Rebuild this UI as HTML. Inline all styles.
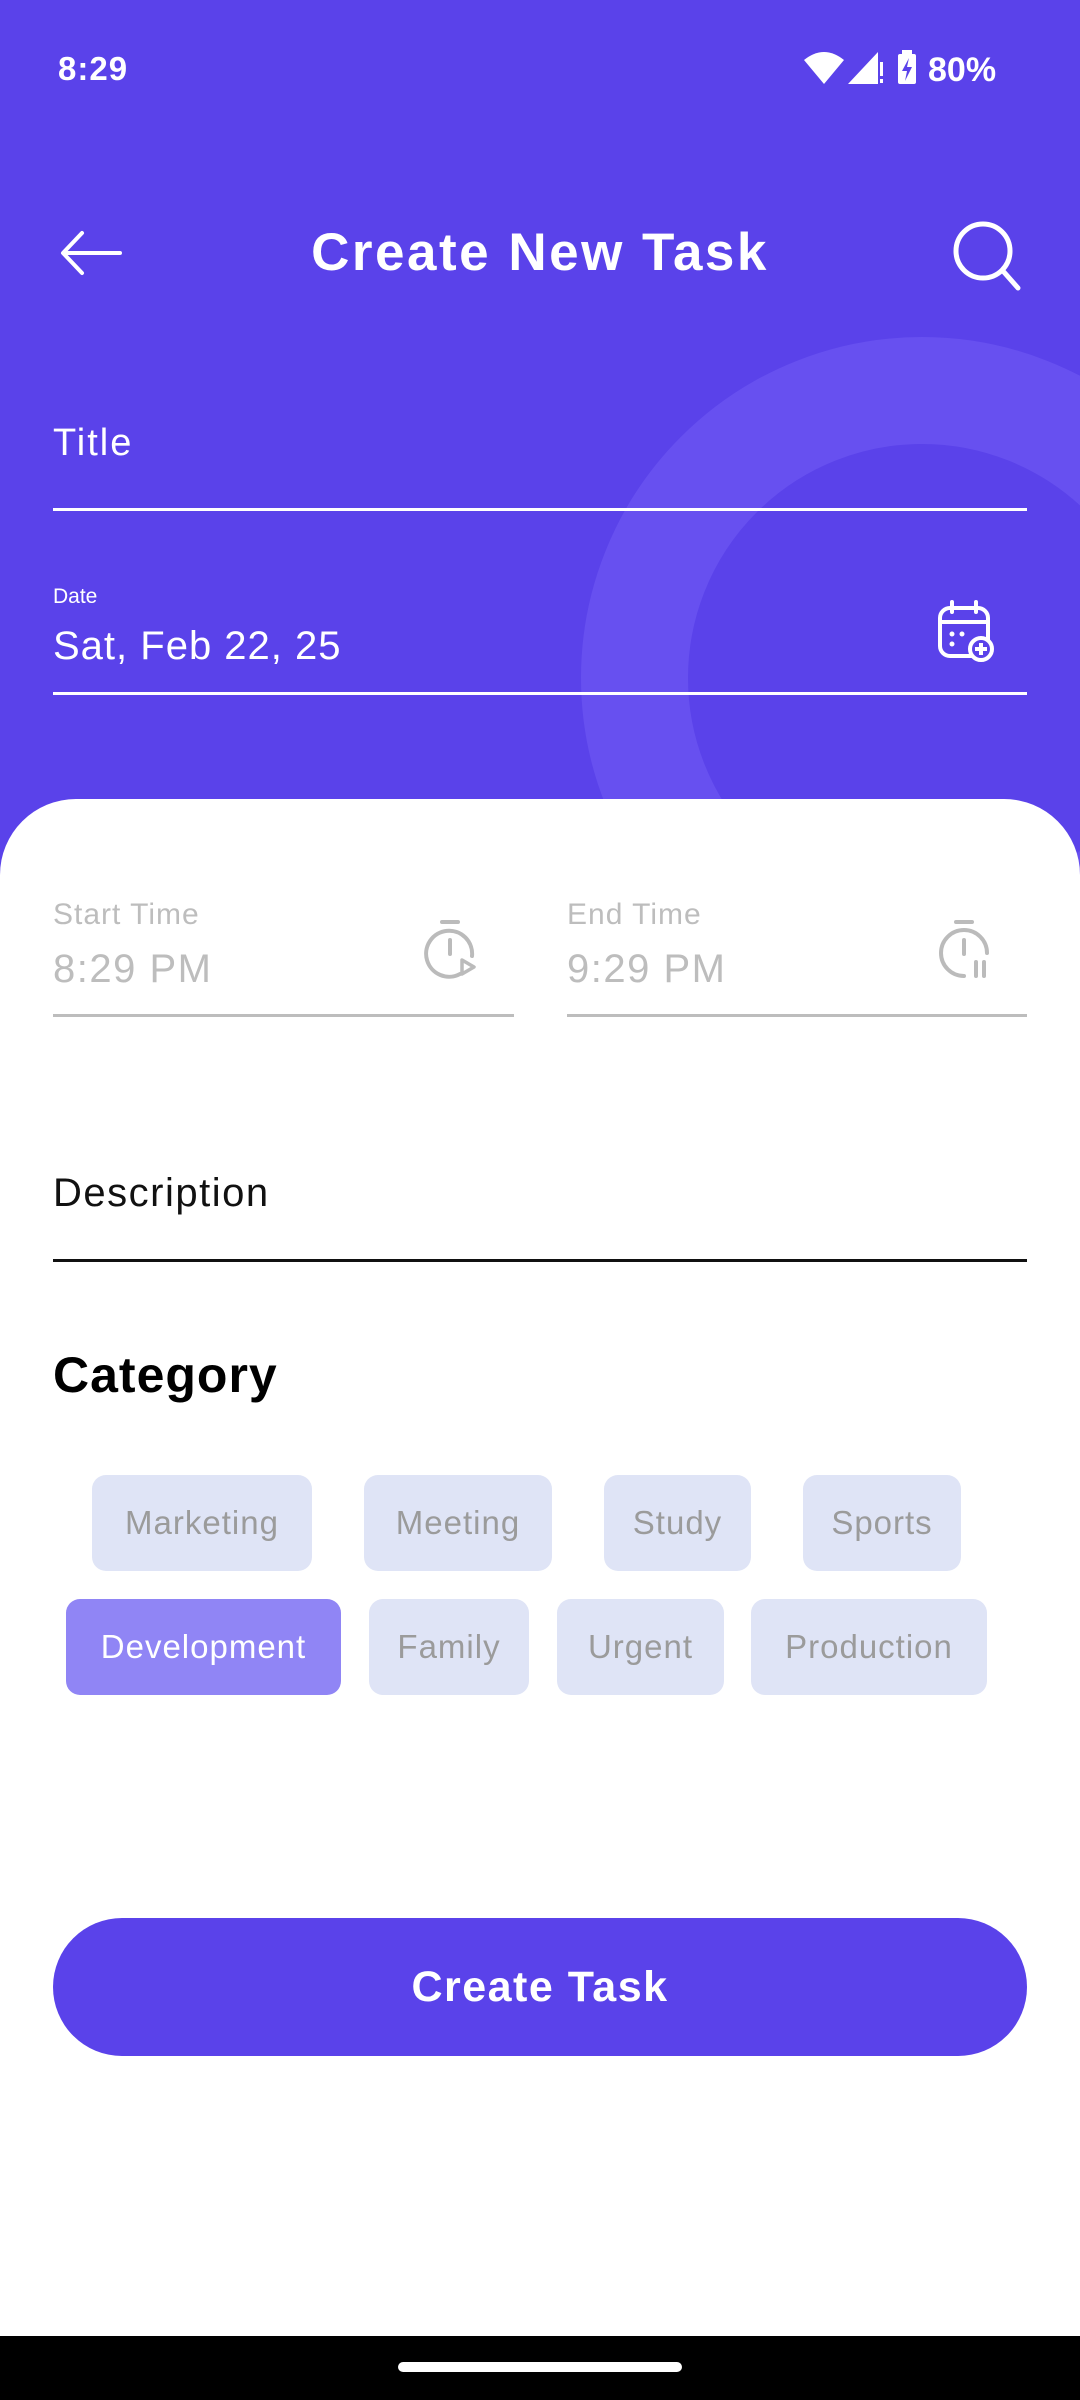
<!DOCTYPE html>
<html><head><meta charset="utf-8"><style>
*{margin:0;padding:0;box-sizing:border-box}
body{width:1080px;height:2400px;position:relative;overflow:hidden;background:#fff;font-family:"Liberation Sans","DejaVu Sans",sans-serif}
.top{position:absolute;left:0;top:0;width:1080px;height:900px;background:#5a42ea;overflow:hidden}
.ring{position:absolute;left:581px;top:337px;width:682px;height:682px;border-radius:50%;border:107px solid #6750f0}
.t{position:absolute;white-space:nowrap}
.line{position:absolute;height:3px}
.sheet{position:absolute;left:0;top:799px;width:1080px;height:1537px;background:#fff;border-radius:76px 76px 0 0}
.chip{position:absolute;height:96px;border-radius:14px;background:#dfe4f6;color:#9b9b9b;font-size:33px;display:flex;align-items:center;justify-content:center;letter-spacing:1px}
</style></head><body>
<div class="top"><div class="ring"></div></div>
<div class="t" style="left:58px;top:50px;font-size:33px;color:#fff;font-weight:bold;letter-spacing:1px">8:29</div>
<svg style="position:absolute;left:800px;top:48px" width="210" height="40" viewBox="0 0 210 40">
<path d="M4 12 Q24 -4 44 12 L24 36 Z" fill="#fff"/>
<path d="M48 36 L78 4 L78 36 Z" fill="#fff"/><rect x="80" y="14" width="3" height="14" fill="#fff"/><rect x="80" y="31" width="3" height="4" fill="#fff"/>
<rect x="98" y="6" width="18" height="30" rx="2" fill="#fff"/><rect x="102" y="2" width="10" height="5" fill="#fff"/>
<path d="M109 10 L102 23 L107 23 L105 33 L112 19 L107 19 Z" fill="#5a42ea"/>
<text x="128" y="33" font-size="34" font-weight="bold" fill="#fff" font-family="Liberation Sans">80%</text>
</svg>
<svg style="position:absolute;left:58px;top:228px" width="68" height="50" viewBox="0 0 68 50"><path d="M62 25 H6 M24 5 L5 25 L24 45" fill="none" stroke="#fff" stroke-width="4" stroke-linecap="round" stroke-linejoin="round"/></svg>
<div class="t" style="left:0;width:1080px;text-align:center;top:222px;font-size:53px;color:#fff;font-weight:bold;letter-spacing:2.5px">Create New Task</div>
<svg style="position:absolute;left:950px;top:218px" width="76" height="76" viewBox="0 0 76 76"><circle cx="33" cy="33" r="27" fill="none" stroke="#fff" stroke-width="5"/><path d="M53 53 L68 70" stroke="#fff" stroke-width="5" stroke-linecap="round"/></svg>
<div class="t" style="left:53px;top:422px;font-size:38px;color:#fff;letter-spacing:2px">Title</div>
<div class="line" style="left:53px;top:508px;width:974px;background:#fff"></div>
<div class="t" style="left:53px;top:585px;font-size:21px;color:#fff">Date</div>
<div class="t" style="left:53px;top:624px;font-size:40px;color:#fff;letter-spacing:1px">Sat, Feb 22, 25</div>
<svg style="position:absolute;left:936px;top:600px" width="60" height="62" viewBox="0 0 60 62"><rect x="4" y="8" width="48" height="48" rx="10" fill="none" stroke="#fff" stroke-width="4"/><path d="M4 22 H52 M16 2 V12 M40 2 V12" stroke="#fff" stroke-width="4" stroke-linecap="round"/><circle cx="16" cy="34" r="2.5" fill="#fff"/><circle cx="26" cy="34" r="2.5" fill="#fff"/><circle cx="16" cy="44" r="2.5" fill="#fff"/><circle cx="45" cy="49" r="11" fill="#5a42ea" stroke="#fff" stroke-width="4"/><path d="M45 43 V55 M39 49 H51" stroke="#fff" stroke-width="4"/></svg>
<div class="line" style="left:53px;top:692px;width:974px;background:#fff"></div>
<div class="sheet"></div>
<div class="t" style="left:53px;top:898px;font-size:30px;color:#bdbdbd;letter-spacing:1px">Start Time</div>
<div class="t" style="left:53px;top:947px;font-size:40px;color:#bdbdbd;letter-spacing:1.5px">8:29 PM</div>
<div class="t" style="left:567px;top:898px;font-size:30px;color:#bdbdbd;letter-spacing:1px">End Time</div>
<div class="t" style="left:567px;top:947px;font-size:40px;color:#bdbdbd;letter-spacing:1.5px">9:29 PM</div>
<svg style="position:absolute;left:424px;top:918px" width="56" height="62" viewBox="0 0 56 62"><path d="M18 4 H34" stroke="#bbb" stroke-width="4" stroke-linecap="round"/><path d="M36 56 A23 23 0 1 1 48 38" fill="none" stroke="#bbb" stroke-width="4" stroke-linecap="round"/><path d="M26 22 V36" stroke="#bbb" stroke-width="4" stroke-linecap="round"/><path d="M38 42 L50 49 L38 56 Z" fill="none" stroke="#bbb" stroke-width="3.5" stroke-linejoin="round"/></svg>
<svg style="position:absolute;left:938px;top:918px" width="56" height="62" viewBox="0 0 56 62"><path d="M18 4 H34" stroke="#bbb" stroke-width="4" stroke-linecap="round"/><path d="M26 58 A23 23 0 1 1 49 35" fill="none" stroke="#bbb" stroke-width="4" stroke-linecap="round"/><path d="M26 22 V36 M38 44 V58 M46 44 V58" stroke="#bbb" stroke-width="4" stroke-linecap="round"/></svg>
<div class="line" style="left:53px;top:1014px;width:461px;background:#bdbdbd"></div>
<div class="line" style="left:567px;top:1014px;width:460px;background:#bdbdbd"></div>
<div class="t" style="left:53px;top:1171px;font-size:40px;color:#111;letter-spacing:1.5px">Description</div>
<div class="line" style="left:53px;top:1259px;width:974px;background:#111"></div>
<div class="t" style="left:53px;top:1346px;font-size:50px;color:#000;font-weight:bold;letter-spacing:1px">Category</div>
<div class="chip" style="left:92px;top:1475px;width:220px">Marketing</div>
<div class="chip" style="left:364px;top:1475px;width:188px">Meeting</div>
<div class="chip" style="left:604px;top:1475px;width:147px">Study</div>
<div class="chip" style="left:803px;top:1475px;width:158px">Sports</div>
<div class="chip" style="left:66px;top:1599px;width:275px;background:#9085f5;color:#fff">Development</div>
<div class="chip" style="left:369px;top:1599px;width:160px">Family</div>
<div class="chip" style="left:557px;top:1599px;width:167px">Urgent</div>
<div class="chip" style="left:751px;top:1599px;width:236px">Production</div>
<div style="position:absolute;left:53px;top:1918px;width:974px;height:138px;border-radius:69px;background:#5a42ea;color:#fff;font-size:43px;font-weight:bold;letter-spacing:1.5px;display:flex;align-items:center;justify-content:center">Create Task</div>
<div style="position:absolute;left:0;top:2336px;width:1080px;height:64px;background:#000"></div>
<div style="position:absolute;left:398px;top:2362px;width:284px;height:10px;border-radius:5px;background:#fff"></div>
</body></html>
